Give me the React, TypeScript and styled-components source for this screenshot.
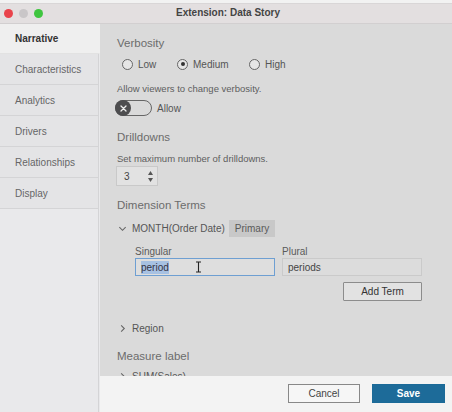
import React from 'react'
import styled, { createGlobalStyle } from 'styled-components'

const GlobalStyle = createGlobalStyle`
  html, body {
    margin: 0;
    padding: 0;
    background: #f4f4f4;
  }
  body {
    font-family: "Liberation Sans", Arial, sans-serif;
    color: #555;
  }
`

const tabs = ['Narrative', 'Characteristics', 'Analytics', 'Drivers', 'Relationships', 'Display']

const Chevron: React.FC<{ open?: boolean }> = ({ open }) => (
  <ChevronIcon viewBox="0 0 10 10">
    {open ? (
      <polyline points="1.5,3.5 5,7 8.5,3.5" />
    ) : (
      <polyline points="3.5,1.5 7,5 3.5,8.5" />
    )}
  </ChevronIcon>
)

const App: React.FC = () => {
  return (
    <>
      <GlobalStyle />
      <Window>
        <TopStrip />
        <TitleBar>
          <Lights>
            <Light color="#e9434b" />
            <Light color="#c9c6c8" />
            <Light color="#3fc53f" />
          </Lights>
          <Title>Extension: Data Story</Title>
        </TitleBar>
        <Body>
          <Sidebar>
            {tabs.map((t, i) => (
              <Tab key={t} active={i === 0}>{t}</Tab>
            ))}
            <SidebarRest />
          </Sidebar>
          <Main>
            <Content>
              <Heading>Verbosity</Heading>
              <RadioRow>
                <RadioItem>
                  <Radio />
                  Low
                </RadioItem>
                <RadioItem>
                  <Radio checked />
                  Medium
                </RadioItem>
                <RadioItem>
                  <Radio />
                  High
                </RadioItem>
              </RadioRow>
              <Hint style={{ marginTop: 12 }}>Allow viewers to change verbosity.</Hint>
              <ToggleRow>
                <Toggle>
                  <Knob>
                    <svg width="7" height="7" viewBox="0 0 7 7">
                      <path d="M1 1 L6 6 M6 1 L1 6" stroke="#eee" strokeWidth="1.3" strokeLinecap="round" />
                    </svg>
                  </Knob>
                </Toggle>
                <span>Allow</span>
              </ToggleRow>

              <Heading style={{ marginTop: 13 }}>Drilldowns</Heading>
              <Hint style={{ marginTop: 8 }}>Set maximum number of drilldowns.</Hint>
              <Spinner>
                <span>3</span>
                <Arrows>
                  <svg width="5" height="4" viewBox="0 0 5 4"><polygon points="0,4 2.5,0 5,4" fill="#555" /></svg>
                  <svg width="5" height="4" viewBox="0 0 5 4"><polygon points="0,0 2.5,4 5,0" fill="#555" /></svg>
                </Arrows>
              </Spinner>

              <Heading style={{ marginTop: 11 }}>Dimension Terms</Heading>
              <TreeRow style={{ marginTop: 7 }}>
                <Chevron open />
                <span>MONTH(Order Date)</span>
                <Badge>Primary</Badge>
              </TreeRow>
              <TermGrid>
                <Field>
                  <FieldLabel>Singular</FieldLabel>
                  <Input focused>
                    <Selected>period</Selected>
                    <Cursor viewBox="0 0 7 12">
                      <path d="M1 1 H6 M3.5 1 V11 M1 11 H6" stroke="#222" strokeWidth="1.1" fill="none" />
                    </Cursor>
                  </Input>
                </Field>
                <Field>
                  <FieldLabel>Plural</FieldLabel>
                  <Input>periods</Input>
                </Field>
              </TermGrid>
              <ButtonRow>
                <AddButton>Add Term</AddButton>
              </ButtonRow>
              <TreeRow style={{ marginTop: 19 }}>
                <Chevron />
                <span>Region</span>
              </TreeRow>

              <Heading style={{ marginTop: 11 }}>Measure label</Heading>
              <TreeRow style={{ marginTop: 4 }}>
                <Chevron />
                <span>SUM(Sales)</span>
              </TreeRow>
            </Content>
            <Footer>
              <FooterButton>Cancel</FooterButton>
              <FooterButton primary>Save</FooterButton>
            </Footer>
          </Main>
        </Body>
      </Window>
    </>
  )
}

export default App

const Window = styled.div`
  width: 452px;
  height: 412px;
  display: flex;
  flex-direction: column;
  overflow: hidden;
  background: #dadada;
`

const TopStrip = styled.div`
  height: 4px;
  background: #f2f2f2;
  border-bottom: 1px solid #d9d6d7;
  box-sizing: border-box;
`

const TitleBar = styled.div`
  height: 20px;
  background: #e3dfe0;
  border-bottom: 1px solid #d2cfd0;
  box-sizing: border-box;
  display: flex;
  align-items: center;
  position: relative;
`

const Lights = styled.div`
  display: flex;
  gap: 6px;
  padding-left: 4px;
`

const Light = styled.div<{ color: string }>`
  width: 9px;
  height: 9px;
  border-radius: 50%;
  background: ${({ color }) => color};
`

const Title = styled.div`
  position: absolute;
  left: 0;
  right: 0;
  top: 3px;
  text-align: center;
  font-size: 10px;
  font-weight: bold;
  color: #444;
  padding-left: 4px;
`

const Body = styled.div`
  flex: 1;
  display: flex;
  min-height: 0;
`

const Sidebar = styled.div`
  width: 100px;
  display: flex;
  flex-direction: column;
  background: #e9e9eb;
`

const Tab = styled.div<{ active?: boolean }>`
  height: 31px;
  box-sizing: border-box;
  display: flex;
  align-items: center;
  padding-left: 15px;
  font-size: 10px;
  color: ${({ active }) => (active ? '#333' : '#666')};
  font-weight: ${({ active }) => (active ? 'bold' : 'normal')};
  background: ${({ active }) => (active ? '#efefef' : '#e4e4e6')};
  border-bottom: 1px solid ${({ active }) => (active ? '#e2e2e2' : '#d4d4d6')};
  border-right: 1px solid ${({ active }) => (active ? '#efefef' : '#d4d4d6')};
  margin-right: ${({ active }) => (active ? '0' : '1px')};
  &:first-child {
    height: 30px;
  }
`

const SidebarRest = styled.div`
  flex: 1;
  background: #e9e9eb;
  border-right: 1px solid #d4d4d6;
  margin-right: 1px;
`

const Main = styled.div`
  flex: 1;
  display: flex;
  flex-direction: column;
  min-width: 0;
`

const Content = styled.div`
  flex: 1;
  overflow: hidden;
  background: #dadada;
  padding: 11px 17px 0 17px;
  display: flex;
  flex-direction: column;
  align-items: flex-start;
`

const Heading = styled.div`
  font-size: 11.5px;
  line-height: 16px;
  color: #6c6c6c;
  flex-shrink: 0;
`

const RadioRow = styled.div`
  display: flex;
  margin-top: 6px;
  padding-left: 5px;
  height: 14px;
  flex-shrink: 0;
`

const RadioItem = styled.label`
  display: flex;
  align-items: center;
  gap: 5px;
  font-size: 10px;
  color: #555;
  &:nth-child(1) { width: 55px; }
  &:nth-child(2) { width: 72px; }
`

const Radio = styled.span<{ checked?: boolean }>`
  width: 11px;
  height: 11px;
  box-sizing: border-box;
  border-radius: 50%;
  border: 1px solid #666;
  background: #e6e6e6;
  display: flex;
  align-items: center;
  justify-content: center;
  &::after {
    content: '';
    width: 4px;
    height: 4px;
    border-radius: 50%;
    background: ${({ checked }) => (checked ? '#333' : 'transparent')};
  }
`

const Hint = styled.div`
  font-size: 9.5px;
  line-height: 12px;
  color: #5e5e5e;
  flex-shrink: 0;
`

const ToggleRow = styled.div`
  display: flex;
  align-items: center;
  gap: 5px;
  margin-top: 5px;
  margin-left: -2px;
  font-size: 10px;
  color: #555;
  flex-shrink: 0;
`

const Toggle = styled.div`
  width: 37px;
  height: 16px;
  box-sizing: border-box;
  border: 1px solid #666;
  border-radius: 8px;
  display: flex;
  align-items: center;
`

const Knob = styled.div`
  width: 16px;
  height: 16px;
  margin-left: -1px;
  border-radius: 50%;
  background: #4d4d4f;
  display: flex;
  align-items: center;
  justify-content: center;
`

const Spinner = styled.div`
  width: 42px;
  height: 20px;
  flex-shrink: 0;
  box-sizing: border-box;
  border: 1px solid #c9c9c9;
  background: #e2e2e2;
  display: flex;
  align-items: center;
  justify-content: space-between;
  padding: 0 4px 0 7px;
  font-size: 10px;
  color: #444;
  margin-left: -1px;
  margin-top: 1px;
`

const Arrows = styled.div`
  display: flex;
  flex-direction: column;
  gap: 3px;
`

const TreeRow = styled.div`
  display: flex;
  align-items: center;
  flex-shrink: 0;
  gap: 5px;
  height: 17px;
  font-size: 10px;
  color: #555;
  padding-left: 1px;
`

const ChevronIcon = styled.svg`
  width: 9px;
  height: 9px;
  fill: none;
  stroke: #666;
  stroke-width: 1.2;
`

const Badge = styled.span`
  background: #c8c8c8;
  color: #5a5a5a;
  height: 17px;
  display: flex;
  align-items: center;
  padding: 0 6px;
  margin-left: -1px;
`

const TermGrid = styled.div`
  display: grid;
  grid-template-columns: 140px 140px;
  gap: 7px;
  margin-top: 9px;
  margin-left: 18px;
  flex-shrink: 0;
`

const Field = styled.div`
  display: flex;
  flex-direction: column;
  gap: 0;
`

const FieldLabel = styled.div`
  font-size: 10px;
  line-height: 12px;
  color: #5a5a5a;
`

const Input = styled.div<{ focused?: boolean }>`
  height: 18px;
  box-sizing: border-box;
  border: ${({ focused }) => (focused ? '1.5px solid #6e9fd2' : '1px solid #cacaca')};
  background: ${({ focused }) => (focused ? '#dedede' : '#dcdcdc')};
  display: flex;
  align-items: center;
  padding-left: 5px;
  font-size: 10px;
  color: #444;
  position: relative;
`

const Selected = styled.span`
  background: #a7c1e2;
  color: #334;
  padding: 1px 0;
`

const Cursor = styled.svg`
  position: absolute;
  left: 59px;
  top: 2px;
  width: 7px;
  height: 12px;
`

const ButtonRow = styled.div`
  align-self: stretch;
  display: flex;
  justify-content: flex-end;
  margin-top: 6px;
  padding-right: 13px;
  flex-shrink: 0;
`

const AddButton = styled.div`
  width: 79px;
  height: 19px;
  box-sizing: border-box;
  border: 1px solid #8c8c8c;
  border-radius: 1px;
  background: #e2e2e2;
  display: flex;
  align-items: center;
  justify-content: center;
  font-size: 10px;
  color: #333;
`

const Footer = styled.div`
  height: 36px;
  flex-shrink: 0;
  background: #f3f3f3;
  display: flex;
  align-items: center;
  justify-content: flex-end;
  gap: 12px;
  padding-right: 7px;
`

const FooterButton = styled.div<{ primary?: boolean }>`
  width: ${({ primary }) => (primary ? '73px' : '72px')};
  height: 19px;
  box-sizing: border-box;
  border: 1px solid ${({ primary }) => (primary ? '#1b6a98' : '#888')};
  background: ${({ primary }) => (primary ? '#1d6b99' : '#f6f6f6')};
  color: ${({ primary }) => (primary ? '#fff' : '#444')};
  font-weight: ${({ primary }) => (primary ? 'bold' : 'normal')};
  font-size: 10px;
  display: flex;
  align-items: center;
  justify-content: center;
  margin-top: -1px;
`
